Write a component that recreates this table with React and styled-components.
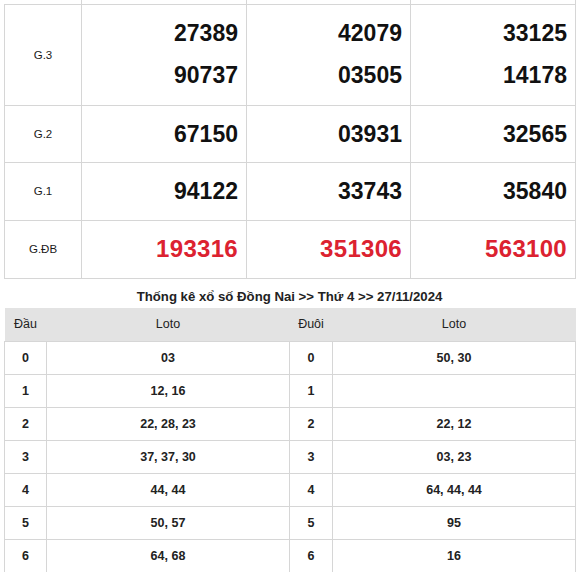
import React from 'react'
import styled, { createGlobalStyle } from 'styled-components'

const GlobalStyle = createGlobalStyle`
  body {
    margin: 0;
    background: #fff;
    font-family: "Liberation Sans", Arial, sans-serif;
    color: #111;
  }
`

const Page = styled.div`
  width: 571px;
  margin-left: 4px;
`

const Table = styled.table`
  width: 571px;
  border-collapse: collapse;
  table-layout: fixed;
`

const Col = styled.col`
  width: ${props => props.$w}px;
`

const CutRow = styled.tr`
  height: 4px;

  td {
    padding: 0;
    border-top: none;
    border-bottom: none;
  }

  td:first-child {
    border-left: none;
  }
`

const PrizeRow = styled.tr`
  height: ${props => props.$h}px;
`

const Label = styled.td`
  border: 1px solid #d6d6d6;
  text-align: center;
  font-size: 11.5px;
  color: #1a1a1a;
  padding: 0;
`

const NumCell = styled.td`
  border: 1px solid #d6d6d6;
  text-align: right;
  padding: 0 8px 0 0;
  vertical-align: middle;
`

const Num = styled.div`
  font-weight: bold;
  font-size: ${props => (props.$special ? 24 : 23)}px;
  line-height: ${props => (props.$double ? 41.5 : 30)}px;
  color: ${props => (props.$special ? '#dc2230' : '#111')};
  letter-spacing: ${props => (props.$special ? '0.3px' : '0')};
`

const Title = styled.div`
  height: 29px;
  box-sizing: border-box;
  padding-top: 10px;
  line-height: 16px;
  text-align: center;
  font-weight: bold;
  font-size: 13.2px;
  color: #222;
`

const HeadRow = styled.tr`
  height: 34px;
  background: #e3e3e3;

  th {
    font-weight: normal;
    font-size: 12.5px;
    color: #222;
    padding: 0;
    border-bottom: 1px solid #d6d6d6;
  }
`

const LotoRow = styled.tr`
  height: 33px;

  td {
    border: 1px solid #d6d6d6;
    text-align: center;
    font-weight: bold;
    font-size: 12.5px;
    color: #222;
    padding: 0;
  }
`

const prizes = [
  { label: 'G.3', h: 101, nums: [['27389', '90737'], ['42079', '03505'], ['33125', '14178']] },
  { label: 'G.2', h: 57, nums: [['67150'], ['03931'], ['32565']] },
  { label: 'G.1', h: 58, nums: [['94122'], ['33743'], ['35840']] },
  { label: 'G.ĐB', h: 58, special: true, nums: [['193316'], ['351306'], ['563100']] }
]

const loto = [
  ['0', '03', '0', '50, 30'],
  ['1', '12, 16', '1', ''],
  ['2', '22, 28, 23', '2', '22, 12'],
  ['3', '37, 37, 30', '3', '03, 23'],
  ['4', '44, 44', '4', '64, 44, 44'],
  ['5', '50, 57', '5', '95'],
  ['6', '64, 68', '6', '16']
]

const App = () => {
  return (
    <Page>
      <GlobalStyle />
      <Table>
        <colgroup>
          <Col $w={77} />
          <Col $w={165} />
          <Col $w={164} />
          <Col $w={165} />
        </colgroup>
        <tbody>
          <CutRow>
            <Label />
            <NumCell />
            <NumCell />
            <NumCell />
          </CutRow>
          {prizes.map(p => (
            <PrizeRow key={p.label} $h={p.h}>
              <Label>{p.label}</Label>
              {p.nums.map((col, i) => (
                <NumCell key={i}>
                  {col.map(n => (
                    <Num key={n} $special={p.special} $double={col.length > 1}>
                      {n}
                    </Num>
                  ))}
                </NumCell>
              ))}
            </PrizeRow>
          ))}
        </tbody>
      </Table>

      <Title>Thống kê xổ số Đồng Nai &gt;&gt; Thứ 4 &gt;&gt; 27/11/2024</Title>

      <Table>
        <colgroup>
          <Col $w={42} />
          <Col $w={243} />
          <Col $w={43} />
          <Col $w={243} />
        </colgroup>
        <thead>
          <HeadRow>
            <th>Đầu</th>
            <th>Loto</th>
            <th>Đuôi</th>
            <th>Loto</th>
          </HeadRow>
        </thead>
        <tbody>
          {loto.map(r => (
            <LotoRow key={r[0]}>
              <td>{r[0]}</td>
              <td>{r[1]}</td>
              <td>{r[2]}</td>
              <td>{r[3]}</td>
            </LotoRow>
          ))}
        </tbody>
      </Table>
    </Page>
  )
}

export default App
